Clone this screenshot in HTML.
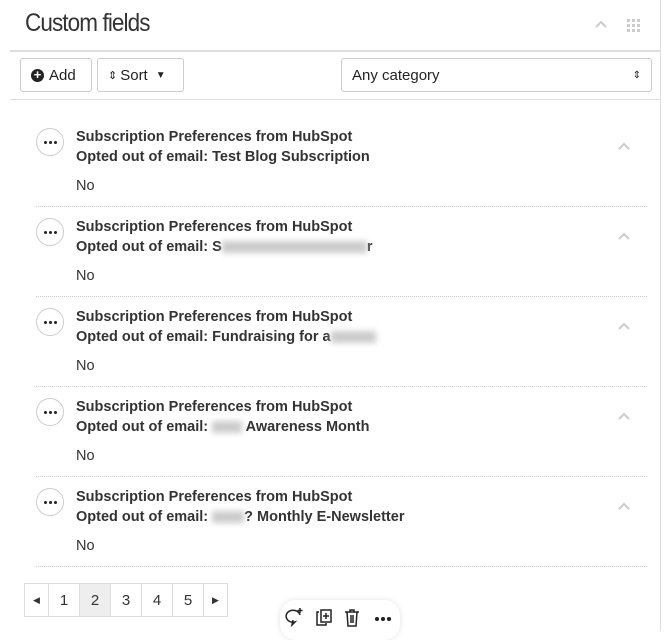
<!DOCTYPE html>
<html><head><style>
body{margin:0;width:670px;height:631px;background:#fff;font-family:"Liberation Sans",sans-serif;color:#222;position:relative;overflow:hidden}
.a{position:absolute}
.title{left:25px;top:9px;font-size:25px;color:#333;letter-spacing:-1px;transform:scaleX(.9);transform-origin:left}
.btn{border:1px solid #ccc;border-radius:3px;height:34px;top:58px;font-size:15px;display:flex;align-items:center;box-sizing:border-box;padding:0 10px;background:#fff}
.dots{width:28px;height:28px;border:1px solid #ccc;border-radius:50%;box-sizing:border-box;display:flex;align-items:center;justify-content:center;gap:2px}
.dots i{width:3px;height:3px;background:#222;border-radius:50%}
.t{left:76px;font-size:14.5px;font-weight:bold;color:#333;line-height:20px}
.no{left:76px;font-size:14.5px;color:#333}
.sep{left:36px;width:611px;border-top:1px dotted #ccc;height:0}
.chev{left:617px}
.blur{display:inline-block;background:#ccc;filter:blur(3px);height:12px;vertical-align:middle}
.pg{top:583px;left:24px;height:32px;border:1px solid #ddd;display:flex;font-size:15px;color:#333}
.pg div{width:30px;display:flex;align-items:center;justify-content:center;border-left:1px solid #ddd}
.pg div:first-child{border-left:0;width:23px}
</style></head><body>
<div class="a title">Custom fields</div>
<svg class="a" style="left:594px;top:20px" width="14" height="9"><path d="M2 7l5-5 5 5" stroke="#ccc" stroke-width="2" fill="none"/></svg>
<div class="a" style="left:627px;top:18px;width:14px;height:14px;background:repeating-linear-gradient(90deg,#ccc 0 3px,transparent 3px 5px);-webkit-mask:repeating-linear-gradient(0deg,#000 0 3px,transparent 3px 5px)"></div>
<div class="a" style="left:10px;top:50px;width:650px;border-top:2px solid #ddd"></div>
<div class="a" style="left:660px;top:0;width:1px;height:631px;background:#ddd"></div>
<div class="a btn" style="left:20px;width:72px"><span style="display:inline-block;width:13px;height:13px;border-radius:50%;background:#222;color:#fff;font-size:13px;line-height:12px;text-align:center;font-weight:bold;margin-right:5px">+</span>Add</div>
<div class="a btn" style="left:97px;width:87px"><span style="font-size:11px;margin-right:3px">&#8661;</span>Sort <span style="font-size:10px;margin-left:8px">&#9660;</span></div>
<div class="a btn" style="left:341px;width:311px;font-size:15px;justify-content:space-between">Any category<span style="font-size:10px">&#8661;</span></div>
<div class="a" style="left:10px;top:99px;width:650px;border-top:1px solid #ddd"></div>

<div class="a dots" style="left:36px;top:128px"><i></i><i></i><i></i></div>
<div class="a t" style="top:127px">Subscription Preferences from HubSpot<br>Opted out of email: Test Blog Subscription</div>
<svg class="a chev" style="top:142px" width="14" height="9"><path d="M2 7l5-5 5 5" stroke="#ccc" stroke-width="2" fill="none"/></svg>
<div class="a no" style="top:178px">No</div>
<div class="a sep" style="top:206px"></div>

<div class="a dots" style="left:36px;top:218px"><i></i><i></i><i></i></div>
<div class="a t" style="top:217px">Subscription Preferences from HubSpot<br>Opted out of email: S<span class="blur" style="width:145px"></span>r</div>
<svg class="a chev" style="top:232px" width="14" height="9"><path d="M2 7l5-5 5 5" stroke="#ccc" stroke-width="2" fill="none"/></svg>
<div class="a no" style="top:268px">No</div>
<div class="a sep" style="top:296px"></div>

<div class="a dots" style="left:36px;top:308px"><i></i><i></i><i></i></div>
<div class="a t" style="top:307px">Subscription Preferences from HubSpot<br>Opted out of email: Fundraising for a<span class="blur" style="width:45px"></span></div>
<svg class="a chev" style="top:322px" width="14" height="9"><path d="M2 7l5-5 5 5" stroke="#ccc" stroke-width="2" fill="none"/></svg>
<div class="a no" style="top:358px">No</div>
<div class="a sep" style="top:386px"></div>

<div class="a dots" style="left:36px;top:398px"><i></i><i></i><i></i></div>
<div class="a t" style="top:397px">Subscription Preferences from HubSpot<br>Opted out of email: <span class="blur" style="width:30px"></span> Awareness Month</div>
<svg class="a chev" style="top:412px" width="14" height="9"><path d="M2 7l5-5 5 5" stroke="#ccc" stroke-width="2" fill="none"/></svg>
<div class="a no" style="top:448px">No</div>
<div class="a sep" style="top:476px"></div>

<div class="a dots" style="left:36px;top:488px"><i></i><i></i><i></i></div>
<div class="a t" style="top:487px">Subscription Preferences from HubSpot<br>Opted out of email: <span class="blur" style="width:32px"></span>? Monthly E-Newsletter</div>
<svg class="a chev" style="top:502px" width="14" height="9"><path d="M2 7l5-5 5 5" stroke="#ccc" stroke-width="2" fill="none"/></svg>
<div class="a no" style="top:538px">No</div>
<div class="a sep" style="top:566px"></div>

<div class="a pg"><div style="font-size:9px">&#9664;</div><div>1</div><div style="background:#eee">2</div><div>3</div><div>4</div><div>5</div><div style="width:23px;font-size:9px">&#9654;</div></div>

<div class="a" style="left:280px;top:600px;width:120px;height:40px;border-radius:16px;background:#fff;box-shadow:0 0 6px rgba(0,0,0,.12)"></div>
<svg class="a" style="left:284px;top:606px" width="110" height="24" viewBox="0 0 110 24" fill="none" stroke="#222" stroke-width="1.5">
<path d="M16 9a7 6 0 1 0-5 7l-3 3 1-5"/><path d="M16 2v5M13.5 4.5h5"/>
<path d="M35 6h-2v13h9v-2"/><rect x="37" y="4" width="10" height="12"/><path d="M42 7v6M39 10h6"/>
<path d="M61 6h14M66 6V4h4v2M63 6l1 14h8l1-14M67 9v8M69 9v8"/>
<circle cx="93" cy="13" r="1.3" fill="#222"/><circle cx="99" cy="13" r="1.3" fill="#222"/><circle cx="105" cy="13" r="1.3" fill="#222"/>
</svg>
</body></html>
